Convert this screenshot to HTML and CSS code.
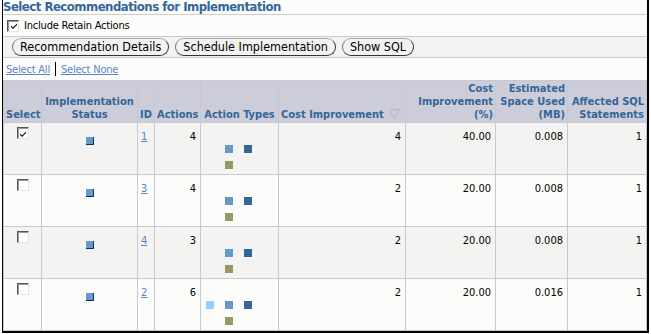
FILE: index.html
```html
<!DOCTYPE html>
<html>
<head>
<meta charset="utf-8">
<link rel="stylesheet" href="styles.css">
</head>
<body>
<div class="frame">
  <h1 class="title">Select Recommendations for Implementation</h1>
  <div class="retain"><span class="cb checked"><svg viewBox="0 0 8 8" width="8" height="8"><path d="M1 3.5 L3 5.5 L7 1.5 L7 3 L3 7 L1 5 Z" fill="#000"/></svg></span><span class="retain-label">Include Retain Actions</span></div>
  <div class="toolbar">
    <button class="btn">Recommendation Details</button>
    <button class="btn">Schedule Implementation</button>
    <button class="btn">Show SQL</button>
  </div>
  <div class="selectlinks"><a href="#">Select All</a><span class="sep"></span><a href="#">Select None</a></div>
  <table class="grid">
    <colgroup>
      <col class="c-select"><col class="c-status"><col class="c-id"><col class="c-actions"><col class="c-types"><col class="c-cost"><col class="c-pct"><col class="c-space"><col class="c-sql">
    </colgroup>
    <thead>
      <tr>
        <th class="left">Select</th>
        <th>Implementation Status</th>
        <th>ID</th>
        <th>Actions</th>
        <th>Action Types</th>
        <th class="left">Cost Improvement <svg class="sort" viewBox="0 0 11 10" width="11" height="10"><path d="M0.5 0.5 H10.5 L5.5 9.5 Z" fill="none" stroke="#b8b8c4" stroke-width="1"/></svg></th>
        <th class="num">Cost Improvement (%)</th>
        <th class="num">Estimated Space Used (MB)</th>
        <th class="num">Affected SQL Statements</th>
      </tr>
    </thead>
    <tbody>
      <tr class="odd">
        <td class="center"><span class="cb checked"><svg viewBox="0 0 8 8" width="8" height="8"><path d="M1 3.5 L3 5.5 L7 1.5 L7 3 L3 7 L1 5 Z" fill="#000"/></svg></span></td>
        <td class="center"><span class="status"></span></td>
        <td><a href="#">1</a></td>
        <td class="num">4</td>
        <td><div class="types"><span class="t t-med"></span><span class="t t-dark"></span><span class="t t-olive"></span></div></td>
        <td class="num">4</td>
        <td class="num">40.00</td>
        <td class="num">0.008</td>
        <td class="num">1</td>
      </tr>
      <tr class="even">
        <td class="center"><span class="cb"></span></td>
        <td class="center"><span class="status"></span></td>
        <td><a href="#">3</a></td>
        <td class="num">4</td>
        <td><div class="types"><span class="t t-med"></span><span class="t t-dark"></span><span class="t t-olive"></span></div></td>
        <td class="num">2</td>
        <td class="num">20.00</td>
        <td class="num">0.008</td>
        <td class="num">1</td>
      </tr>
      <tr class="odd">
        <td class="center"><span class="cb"></span></td>
        <td class="center"><span class="status"></span></td>
        <td><a href="#">4</a></td>
        <td class="num">3</td>
        <td><div class="types"><span class="t t-med"></span><span class="t t-dark"></span><span class="t t-olive"></span></div></td>
        <td class="num">2</td>
        <td class="num">20.00</td>
        <td class="num">0.008</td>
        <td class="num">1</td>
      </tr>
      <tr class="even">
        <td class="center"><span class="cb"></span></td>
        <td class="center"><span class="status"></span></td>
        <td><a href="#">2</a></td>
        <td class="num">6</td>
        <td><div class="types"><span class="t t-light"></span><span class="t t-med"></span><span class="t t-dark"></span><span class="t t-olive"></span></div></td>
        <td class="num">2</td>
        <td class="num">20.00</td>
        <td class="num">0.016</td>
        <td class="num">1</td>
      </tr>
    </tbody>
  </table>
</div>
</body>
</html>
```
FILE: styles.css
```css
html, body {
  margin: 0;
  padding: 0;
  background: #ffffff;
}
body {
  font-family: "DejaVu Sans Condensed", "DejaVu Sans", sans-serif;
  font-size: 11px;
  color: #000;
}
.frame {
  width: 647px;
  height: 333px;
  margin-left: 2px;
  box-sizing: border-box;
  background: #fcfdfa;
  border-left: 1px solid #000;
  border-right: 2px solid #000;
  border-bottom: 2px solid #000;
  overflow: hidden;
}
.title {
  margin: 0;
  font-size: 13px;
  letter-spacing: -0.5px;
  font-weight: bold;
  color: #336699;
  line-height: 14px;
  height: 14px;
  border-bottom: 1px solid #cccccc;
  white-space: nowrap;
}
.retain {
  display: flex;
  align-items: center;
  height: 21px;
  padding-left: 4px;
  gap: 5px;
}
.retain-label {
  font-size: 11px;
  letter-spacing: -0.2px;
}
.cb {
  display: inline-flex;
  align-items: center;
  justify-content: center;
  box-sizing: border-box;
  width: 12px;
  height: 12px;
  background: #fff;
  border: 1px solid;
  border-color: #555 #e4e4e4 #e4e4e4 #555;
  box-shadow: inset 1px 1px 0 #999;
}
.cb svg { display: block; margin: 1px 0 0 1px; }
.toolbar {
  display: flex;
  align-items: center;
  gap: 6px;
  height: 20px;
  padding-left: 9px;
  background: #f2f3f0;
  border-top: 1px solid #c9c9d3;
  border-bottom: 1px solid #c9c9d3;
}
.btn {
  font-family: inherit;
  font-size: 12.5px;
  line-height: 14px;
  height: 18px;
  padding: 0 7px;
  margin: 0;
  background: #f2f3f0;
  color: #000;
  border: 1px solid;
  border-color: #a8a8a8 #333 #333 #777;
  border-radius: 9px;
}
.selectlinks {
  display: flex;
  align-items: center;
  height: 22px;
  gap: 5px;
  padding-left: 3px;
}
.selectlinks a {
  letter-spacing: -0.2px;
}
.selectlinks a, .grid a {
  color: #5a84c6;
  text-decoration: underline;
}
.sep {
  width: 1px;
  height: 14px;
  background: #000;
}
.grid {
  border-collapse: collapse;
  table-layout: fixed;
  width: 644px;
}
.c-select { width: 38px; }
.c-status { width: 96px; }
.c-id { width: 17px; }
.c-actions { width: 46px; }
.c-types { width: 78px; }
.c-cost { width: 127px; }
.c-pct { width: 90px; }
.c-space { width: 72px; }
.c-sql { width: 79px; }
.grid th, .grid td {
  border: 1px solid #c8c8d4;
}
.grid th {
  background: #cdcdd9;
  color: #336699;
  font-weight: bold;
  font-size: 11px;
  line-height: 13px;
  height: 39px;
  padding: 1px 2px 1px;
  vertical-align: bottom;
  text-align: center;
}
.grid th.left { text-align: left; }
.grid th.num { text-align: right; }
.sort { vertical-align: -1px; margin-left: 2px; }
.grid td {
  vertical-align: top;
  padding: 7px 3px 0;
  height: 44px;
  line-height: 14px;
}
.grid td.num { text-align: right; padding-right: 4px; }
.grid td.center { text-align: center; }
.grid td .cb { margin-top: -3px; vertical-align: top; }
tr.odd td { background: #f3f4f1; }
tr.even td { background: #fcfdfa; }
.status {
  display: inline-block;
  width: 8px;
  height: 8px;
  box-sizing: border-box;
  background: #6699cc;
  border-right: 1px solid #003366;
  border-bottom: 1px solid #003366;
  margin-top: 7px;
  vertical-align: top;
}
.types {
  display: grid;
  grid-template-columns: repeat(3, 8px);
  grid-auto-rows: 8px;
  column-gap: 11px;
  row-gap: 8px;
  margin: 15px 0 0 2px;
}
.t { display: block; width: 8px; height: 8px; }
.t-light { background: #99ccff; grid-column: 1; grid-row: 1; }
.t-med { background: #6699cc; grid-column: 2; grid-row: 1; }
.t-dark { background: #336699; grid-column: 3; grid-row: 1; }
.t-olive { background: #999966; grid-column: 2; grid-row: 2; }
```
